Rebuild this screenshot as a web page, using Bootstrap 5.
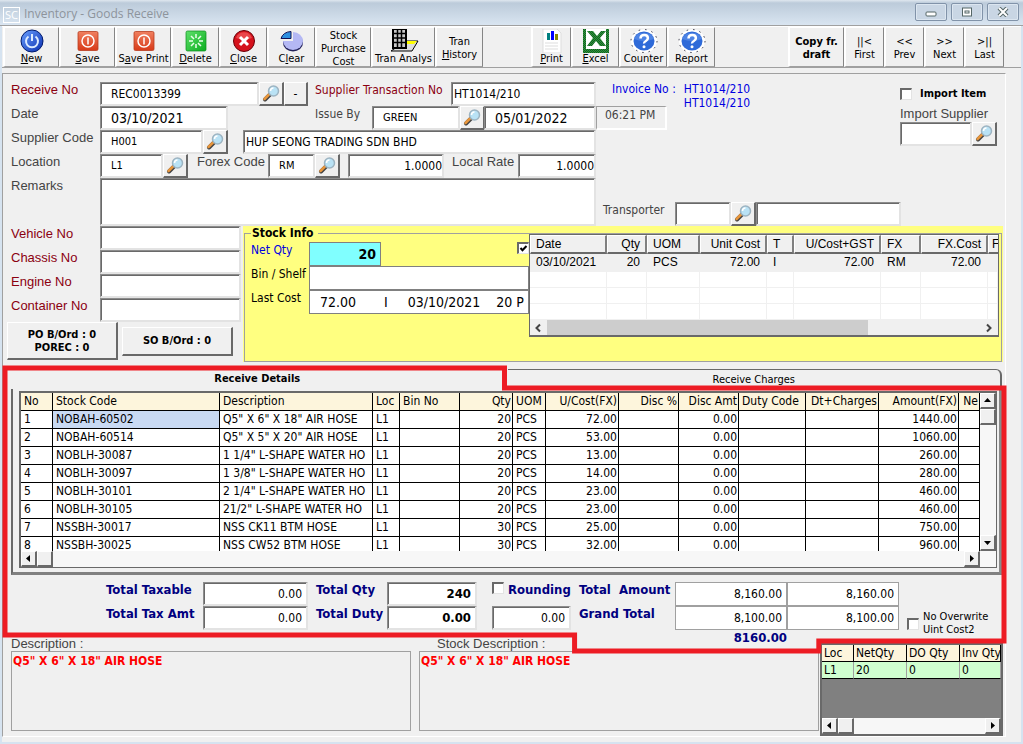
<!DOCTYPE html>
<html lang="en">
<head>
<meta charset="utf-8">
<meta name="viewport" content="width=device-width, initial-scale=1">
<title>Inventory - Goods Receive</title>
<link href="https://cdn.jsdelivr.net/npm/bootstrap@5.3.0/dist/css/bootstrap.min.css" rel="stylesheet">
<script src="https://cdn.jsdelivr.net/npm/bootstrap@5.3.0/dist/js/bootstrap.bundle.min.js"></script>
<style>
:root{--tah:"DejaVu Sans Condensed","DejaVu Sans",sans-serif;--ari:"Liberation Sans",Arial,sans-serif;--dk:#696969;--md:#a0a0a0;--lt:#e3e3e3}
body{font:12px/16px var(--tah);color:#000;background:#f0f0f0}
button,input,textarea{font:inherit;color:inherit;border-radius:0}
.win{border:solid #d6e3f0;border-width:0 2px 2px;min-height:100vh}
.titlebar{height:26px;margin:0 -2px;padding:3px 4px 0 3px;background:linear-gradient(#dfe7ef 0,#bccbda 3px,#d9e5f1 25px);border-bottom:1px solid #a0a0a0;color:#8d949c;font-family:"Open Sans",sans-serif}
.titlebar h1{font-size:12px;line-height:22px}
.logo-sc{width:17px;height:16px;border:1px solid #fff;color:#fff;font-size:11px;line-height:14px;text-align:center}
.capbtn{width:32px;height:18px;padding:0;border:1px solid #8193a9;border-radius:2px;background:#c9d6e4;box-shadow:inset 0 0 0 1px #dce6f0}
.toolbar{height:42px;border-top:1px solid #fff;border-bottom:1px solid #a0a0a0;padding:0 17px 0 1px}
.tb{height:40px;padding:1px 0 0;border:solid;border-width:1px 1px 1px 2px;border-color:#fff #858585 #a0a0a0 #fff;background:#f0f0f0;line-height:13px;text-align:center;white-space:nowrap;overflow:hidden}
.tb svg{width:24px;height:24px;display:block;margin:0 auto}
.tb .cap{display:block;line-height:14px;margin-top:-1px;position:relative;font-size:11px}
.w40{width:40px}.w48{width:48px}.w56{width:56px}.w64{width:64px}.w72{width:72px}
.blue{color:#0000e0}
.panel{margin:5px 15px 4px 0;border:solid;border-width:1px 1px 1px 1px;border-color:#a0a0a0 #fff #fff #a0a0a0}
.frow{display:grid;height:24px}
.lab{font:13px/16px var(--ari);color:#444;white-space:nowrap}
.tlab{white-space:nowrap;color:#444}
.maroon{color:#8b0010}
.fld{width:100%;min-width:0;height:24px;padding:0 4px;border:solid;border-width:1px 2px 2px 1px;border-color:#8c8c8c var(--lt) var(--lt) #8c8c8c;box-shadow:inset 1px 1px #696969;background:#fff;display:block;resize:none;outline:0}
.f11{font-size:11px}.f14{font-size:14px}.pl{padding-left:10px}.pl1{padding-left:2px}
.lens,.raised{padding:0;border:solid;border-width:1px 2px 2px 1px;border-color:#fff var(--dk) var(--dk) #fff;background:#f0f0f0}
.lens{width:25px;height:24px}.lens svg{display:block;width:20px;height:20px;margin:auto}
.r-rec{grid-template-columns:89px 159px 25px 31px 136px 1fr}
.r-rec .lens:nth-of-type(2){width:24px}
.r-date{grid-template-columns:89px 128px 87px 57px 88px 24px 1fr}
.r-sup{grid-template-columns:89px 103px 40px 1fr}
.r-loc{grid-template-columns:89px 63px 26px 79px 47px 33px 96px 74px 1fr}
.r-rem{grid-template-columns:89px 1fr;height:48px}.r-rem .fld{height:48px}
.r-side{grid-template-columns:89px 1fr;margin-right:2px}
.r-tran{grid-template-columns:72px 56px 25px 145px;padding-left:7px}
.topform{flex:0 0 585px}
.invoice{height:24px;line-height:14px}
.timebox{width:71px;border-color:#a0a0a0 #fff #fff #a0a0a0;box-shadow:none}
.chk{appearance:none;width:12px;height:12px;margin:0;flex:none;border:solid;border-width:2px 1px 1px 2px;border-color:var(--dk) var(--lt) var(--lt) var(--dk);background:#fff}
.chk:checked{background:#fff url("data:image/svg+xml,%3Csvg xmlns='http://www.w3.org/2000/svg' viewBox='0 0 9 9'%3E%3Cpath d='M1.500 4l2 2.300L7.500 2' fill='none' stroke='%23000' stroke-width='2'/%3E%3C/svg%3E")}
.sidebox{flex:0 0 240px}
.yellowbox{background:#ffff80;padding:0 1px;height:136px;min-width:0;margin-right:2px}
.yellowbox fieldset{border:1px solid #a0a0a0;height:136px;padding:0 2px 0 6px}
.yellowbox legend{float:none;width:auto;margin:0;padding:0 4px 0 1px;font-size:12px;font-weight:700;line-height:14px}
.stk{margin-top:-6px}
.stk-l{flex:0 0 278px;padding-top:8px}
.r-stk{display:grid;grid-template-columns:58px 1fr;height:24px}
.r-stk .fld{border-width:1px;border-color:#808080;box-shadow:none}
.aqua{background:#80ffff!important}
.listbox{border:1px solid #696969;border-width:1px 1px 2px;background:#fff;height:103px;min-width:0;overflow:hidden;font:12px/18px var(--ari)}
.gridt{table-layout:fixed;width:100%;border-collapse:separate;border-spacing:0}
.gridt th,.gridt td{overflow:hidden;white-space:nowrap;font-weight:400}
.list th{height:19px;line-height:16px;padding:0 5px;background:#f0f0f0;border:solid;border-width:1px 2px 2px 1px;border-color:#fff #808080 #696969 #fff}
.list th:last-child{border-right:0;padding:0 0 0 3px}
.list td{height:16px;line-height:15px;padding:0 6px;border:solid #f0f0f0;border-width:0 1px 1px 0}
.list tr.sel td{background:#f0f0f0;height:18px;line-height:17px}
.r{text-align:right}
.hs{height:16px;background:#f0f0f0}
.hs .thumb{width:321px;background:#cdcdcd}
.raised{font-size:11px;font-weight:700;line-height:13px;width:111px;height:38px;white-space:nowrap}
.raised.short{height:29px}
.details{padding-top:3px}
.tabs,.page{margin:0 3px 0 8px}
.tabs button{height:20px;border:0;background:transparent;font-size:11px;padding:0;flex:1 1 0}
.tabs .on{font-weight:700}
.tabs .off{border:solid #696969;border-width:1px 2px 0 0;border-top-right-radius:6px}
.page{border:solid;border-width:0 3px 3px 2px;border-color:#fff #8a8a8a #808080 #696969;padding:2px 2px 4px 6px}
.page-grid{border:solid #696969;border-width:2px 1px 1px 2px;background:#fff}
.main th,.main td{height:18px;line-height:17px;padding:0 1px 0 3px;border:solid #000;border-width:0 1px 1px 0}
.main th,.loct th{background:#fdf5dc}
.main .cur{background:#c9daf3}
.clip{height:158px;overflow:hidden;min-width:0}
.track{background:#f7f7f7}
.sb{width:16px;height:16px;flex:none;padding:0;border:solid;border-width:1px 2px 2px 1px;border-color:#fff #696969 #696969 #fff;background:#f0f0f0}
.sb svg{display:block;width:13px;height:13px}
.totals{display:grid;grid-template-columns:97px 105px 79px 90px 15px 87px 96px 112px 112px 1fr;grid-template-rows:24px 24px 21px;padding:7px 0 0 103px;color:#000080;font-weight:700;font-size:13px}
.totals .fld{color:#000}
.totals .norm{font-weight:400;font-size:12px}
.totals .f11{font-size:11px;line-height:13px}
.totals .thin{border-width:1px;border-color:#a0a0a0;box-shadow:none}
.totals .underamt{grid-column:8}
.bottomrow{margin-top:-14px}
.descs{height:80px;width:100%;display:block;padding:1px;resize:none;outline:0;background:transparent;border:1px solid #a0a0a0;color:#f00;font-weight:700}
.desc{flex:1 1 0}
.desc .lab{display:block;line-height:14px}
.desc+.desc .lab{padding-left:18px}
.locbox{flex:0 0 183px;height:93px;border:2px solid #696969;background:#808080;margin:6px 2px 0 1px;overflow:hidden}
.loct th{height:17px;line-height:16px;padding:0 2px;border:solid #000;border-width:0 1px 1px 0}
.loct th:last-child{padding-right:0}
.loct td{height:17px;line-height:16px;padding:0 2px;background:#d0ffd0;border:solid;border-width:0 1px 1px 0;border-color:#a0a0a0 #a0a0a0 #000}
.redline{position:absolute;left:0;top:0;width:100%;height:100%;pointer-events:none;overflow:visible}
</style>
</head>
<body>
<svg width="0" height="0" class="position-absolute" aria-hidden="true">
<defs>
<linearGradient id="gb" x2="1" y2="1"><stop offset="0" stop-color="#6aa0ff"/><stop offset="1" stop-color="#0a2fb0"/></linearGradient>
<linearGradient id="gr" x2="0" y2="1"><stop offset="0" stop-color="#f08060"/><stop offset="1" stop-color="#d83a18"/></linearGradient>
<linearGradient id="gg" x2="1" y2="1"><stop offset="0" stop-color="#5fe06a"/><stop offset="1" stop-color="#0cae20"/></linearGradient>
<pattern id="pg" width="2" height="2" patternUnits="userSpaceOnUse"><rect width="2" height="2" fill="#2d9a3c"/><rect width="1" height="1" fill="#155c22"/><rect x="1" y="1" width="1" height="1" fill="#155c22"/></pattern>
<symbol id="lens" viewBox="0 0 20 20"><path d="M9.500 10L4 15.500" stroke="#444" stroke-width="4" stroke-linecap="round"/><path d="M8 10.500L3.500 15" stroke="#e8963c" stroke-width="2.500" stroke-linecap="round"/><circle cx="12.500" cy="7" r="5" fill="#b9e2f5" stroke="#9db4c2" stroke-width="1.500"/><path d="M9.500 7a3 3 0 0 1 3-3" fill="none" stroke="#fff" stroke-width="1.500"/></symbol>
<symbol id="power" viewBox="0 0 24 24"><circle cx="12" cy="12" r="11" fill="url(#gb)" stroke="#001a6e"/><path d="M8.500 7.500a6 6 0 1 0 7 0M12 5v7" fill="none" stroke="#dcebff" stroke-width="2"/></symbol>
<symbol id="save" viewBox="0 0 24 24"><rect x="2" y="2.500" width="20" height="19" rx="1.500" fill="url(#gr)" stroke="#b83c20" stroke-width=".8"/><circle cx="12" cy="12" r="6" fill="none" stroke="#fff" stroke-width="1.500"/><path d="M12 8.500v7" stroke="#fff" stroke-width="1.500"/></symbol>
<symbol id="help" viewBox="0 0 28 24"><ellipse cx="14" cy="12" rx="13" ry="11.500" fill="#fff" stroke="#334" stroke-dasharray="1.500 5"/><ellipse cx="14" cy="12" rx="10.500" ry="9.500" fill="#2e6ad8"/><path d="M4 10a10.500 9 0 0 1 20 0q-10 4-20 0" fill="#6c9cf0" opacity=".5"/><path d="M10.500 9.500q0-3.500 3.700-3.500t3.700 3q0 2-2 3t-1.800 2.500" fill="none" stroke="#fff" stroke-width="2.500"/><circle cx="14" cy="17.700" r="1.500" fill="#fff"/></symbol>
<symbol id="al" viewBox="0 0 13 13"><path d="M8 3v7L4 6.500z"/></symbol>
<symbol id="ar" viewBox="0 0 13 13"><path d="M5 3v7l4-3.500z"/></symbol>
<symbol id="au" viewBox="0 0 13 13"><path d="M3 8h7L6.500 4z"/></symbol>
<symbol id="ad" viewBox="0 0 13 13"><path d="M3 5h7L6.500 9z"/></symbol>
</defs></svg>

<div class="win">
<header class="titlebar d-flex align-items-start">
  <span class="logo-sc mt-1 me-1">SC</span><h1 class="m-0 fw-normal flex-fill">Inventory - Goods Receive</h1>
  <div class="d-flex gap-1">
    <button class="capbtn" aria-label="Minimize"><svg class="d-block mx-auto" width="14" height="10"><rect x="2" y="5" width="10" height="4" rx="1" fill="#fff" stroke="#566"/></svg></button>
    <button class="capbtn" aria-label="Maximize"><svg class="d-block mx-auto" width="14" height="10"><rect x="2.500" y="1" width="9" height="8" fill="#fff" stroke="#566"/><rect x="5" y="4" width="4" height="2" fill="#fff" stroke="#566"/></svg></button>
    <button class="capbtn" aria-label="Close window"><svg class="d-block mx-auto" width="14" height="10"><path d="M3 1l8 8M11 1L3 9" stroke="#566" stroke-width="4"/><path d="M3 1l8 8M11 1L3 9" stroke="#fff" stroke-width="2"/></svg></button>
  </div>
</header>

<nav class="toolbar d-flex">
  <button class="tb w56"><svg><use href="#power"/></svg><span class="cap"><u>N</u>ew</span></button>
  <button class="tb w56"><svg><use href="#save"/></svg><span class="cap"><u>S</u>ave</span></button>
  <button class="tb w56"><svg><use href="#save"/></svg><span class="cap">S<u>a</u>ve Print</span></button>
  <button class="tb w48"><svg viewBox="0 0 24 24"><rect x="2" y="2" width="20" height="20" rx="1.500" fill="url(#gg)" stroke="#0a8a1a" stroke-width=".7"/><path d="M12 5v4M12 15v4M5 12h4M15 12h4M7 7l3 3M14 14l3 3M17 7l-3 3M10 14l-3 3" stroke="#eaffea" stroke-width="1.500"/></svg><span class="cap"><u>D</u>elete</span></button>
  <button class="tb w48"><svg viewBox="0 0 24 24"><circle cx="12" cy="12" r="10.500" fill="#d5121c" stroke="#6a0008"/><path d="M4 9a8.500 8.500 0 0 1 16 0q-8 3-16 0" fill="#ff7a7a" opacity=".5"/><path d="M8 8l8 8M16 8l-8 8" stroke="#fff" stroke-width="3"/></svg><span class="cap"><u>C</u>lose</span></button>
  <button class="tb w48"><svg viewBox="0 0 24 24"><ellipse cx="13" cy="14" rx="10" ry="8.500" fill="#23235a"/><ellipse cx="13" cy="12" rx="10" ry="9" fill="#b4b8f4"/><path d="M13 12V2A10 9 0 0 0 3 12z" fill="#f0f0f0"/><path d="M11 9.500V2.500Q3 3 1 9.500z" fill="#2d8fe0" stroke="#115"/></svg><span class="cap">C<u>l</u>ear</span></button>
  <button class="tb w56 f11">Stock<br>Purchase<br>Cost</button>
  <button class="tb w64"><svg viewBox="0 0 30 24" class="w-auto"><path d="M17 12h12l-6 10H2z" fill="#ddd" stroke="#000"/><path d="M17 12h11l-3 3h-9z" fill="#ff0"/><path d="M4 0h13v19H4z" fill="#c8c8c8" stroke="#000" stroke-width="2"/><path d="M4 4.500h13M4 9h13M4 13.500h13M8.500 0v18M12.500 0v18" stroke="#000" stroke-width="1.500"/></svg><span class="cap">Tran Analys</span></button>
  <button class="tb w48 f11">Tran<br><u>H</u>istory</button>
  <span class="w48"></span>
  <button class="tb w40"><svg viewBox="0 0 24 24"><path d="M3 0h14l4 4v20H3z" fill="#fff" stroke="#ddd"/><path d="M7 4h3v7H7z" fill="#008080"/><path d="M11 2h3v9h-3z" fill="#00f"/><path d="M15 5h3v6h-3z" fill="#880"/><path d="M5 14h13M5 17h13M5 20h13" stroke="#ddd"/></svg><span class="cap"><u>P</u>rint</span></button>
  <button class="tb w48"><svg viewBox="0 0 26 24" class="w-auto"><path d="M0 0h26v24H0z" fill="url(#pg)"/><path d="M3 0h20v20H3z" fill="#fff"/><path d="M4 2h6l4 5 4-5h5l-6 7 6 8h-6l-4-5-4 5H4l6-8z" fill="url(#pg)"/></svg><span class="cap"><u>E</u>xcel</span></button>
  <button class="tb w48"><svg viewBox="0 0 28 24" class="w-auto"><use href="#help"/></svg><span class="cap">Counter</span></button>
  <button class="tb w48"><svg viewBox="0 0 28 24" class="w-auto"><use href="#help"/></svg><span class="cap">Report</span></button>
  <button class="tb w56 fw-bold f11 ms-auto">Copy fr.<br>draft</button>
  <button class="tb w40 f11">||&lt;<br>First</button>
  <button class="tb w40 f11">&lt;&lt;<br>Prev</button>
  <button class="tb w40 f11">&gt;&gt;<br>Next</button>
  <button class="tb w40 f11">&gt;||<br>Last</button>
</nav>

<main class="panel">
<div class="d-flex pt-2 ps-2">
  <div class="topform">
    <div class="frow r-rec">
      <label class="lab maroon" for="rec">Receive No</label><input id="rec" class="fld pl" value="REC0013399"><button class="lens" aria-label="Find receipt"><svg><use href="#lens"/></svg></button><button class="lens">-</button><label class="tlab maroon" for="stn">Supplier Transaction No</label><input id="stn" class="fld pl1" value="HT1014/210">
    </div>
    <div class="frow r-date">
      <label class="lab" for="dt">Date</label><input id="dt" class="fld f14 pl" value="03/10/2021"><span></span><label class="tlab" for="iss">Issue By</label><input id="iss" class="fld f11 pl" value="GREEN"><button class="lens" aria-label="Find issuer"><svg><use href="#lens"/></svg></button><input class="fld f14 pl" aria-label="Issue date" value="05/01/2022">
    </div>
    <div class="frow r-sup">
      <label class="lab" for="sc">Supplier Code</label><input id="sc" class="fld f11 pl" value="H001"><button class="lens" aria-label="Find supplier"><svg><use href="#lens"/></svg></button><input class="fld pl1" aria-label="Supplier name" value="HUP SEONG TRADING SDN BHD">
    </div>
    <div class="frow r-loc">
      <label class="lab" for="loc">Location</label><input id="loc" class="fld f11 pl" value="L1"><button class="lens" aria-label="Find location"><svg><use href="#lens"/></svg></button><label class="lab ps-2" for="fx">Forex Code</label><input id="fx" class="fld f11 pl" value="RM"><button class="lens" aria-label="Find currency"><svg><use href="#lens"/></svg></button><input class="fld r px-0" aria-label="Forex rate" value="1.0000"><label class="lab ps-2" for="lr">Local Rate</label><input id="lr" class="fld r px-0" value="1.0000">
    </div>
    <div class="frow r-rem"><label class="lab" for="rem">Remarks</label><textarea id="rem" class="fld"></textarea></div>
  </div>
  <div class="flex-fill d-flex flex-column justify-content-between">
    <div class="d-flex justify-content-between">
      <div>
        <div class="invoice d-flex ps-3 blue"><span class="pe-2">Invoice No :</span><div>HT1014/210<br>HT1014/210</div></div>
        <output class="fld bg-transparent tlab px-2 timebox">06:21 PM</output>
      </div>
      <div class="pe-2 pt-1">
        <label class="d-flex align-items-center gap-2 fw-bold f11"><input type="checkbox" class="chk">Import Item</label>
        <label class="lab d-block mt-1" for="imp">Import Supplier</label>
        <div class="d-flex"><div class="w72"><input id="imp" class="fld"></div><button class="lens" aria-label="Find import supplier"><svg><use href="#lens"/></svg></button></div>
      </div>
    </div>
    <div class="frow r-tran"><label class="tlab" for="tr">Transporter</label><input id="tr" class="fld"><button class="lens" aria-label="Find transporter"><svg><use href="#lens"/></svg></button><input class="fld" aria-label="Transporter name"></div>
  </div>
</div>

<div class="d-flex">
  <div class="sidebox">
    <div class="ps-2">
      <div class="frow r-side"><label class="lab maroon" for="v1">Vehicle No</label><input id="v1" class="fld"></div>
      <div class="frow r-side"><label class="lab maroon" for="v2">Chassis No</label><input id="v2" class="fld"></div>
      <div class="frow r-side"><label class="lab maroon" for="v3">Engine No</label><input id="v3" class="fld"></div>
      <div class="frow r-side"><label class="lab maroon" for="v4">Container No</label><input id="v4" class="fld"></div>
    </div>
    <div class="d-flex align-items-center ps-1 gap-1"><button class="raised">PO B/Ord : 0<br>POREC : 0</button><button class="raised short">SO B/Ord : 0</button></div>
  </div>
  <section class="yellowbox flex-fill">
    <fieldset><legend>Stock Info</legend>
    <div class="stk d-flex">
      <div class="stk-l">
        <div class="r-stk"><label for="nq" class="blue">Net Qty</label><div class="d-flex justify-content-between"><div class="w72"><input id="nq" class="fld r fw-bold f14 aqua" value="20"></div><input type="checkbox" class="chk" checked aria-label="Show history"></div></div>
        <div class="r-stk"><label for="bs">Bin / Shelf</label><input id="bs" class="fld"></div>
        <div class="r-stk"><label for="lc">Last Cost</label><input id="lc" class="fld f14 pl pe-0" value="72.00       I     03/10/2021    20 P"></div>
      </div>
      <div class="listbox flex-fill">
        <table class="gridt list"><colgroup><col style="width:77px"><col style="width:40px"><col style="width:53px"><col style="width:67px"><col style="width:27px"><col style="width:87px"><col style="width:40px"><col style="width:67px"><col></colgroup>
        <thead><tr><th>Date</th><th class="r">Qty</th><th>UOM</th><th class="r">Unit Cost</th><th>T</th><th class="r">U/Cost+GST</th><th>FX</th><th class="r">FX.Cost</th><th>F</th></tr></thead>
        <tbody><tr class="sel"><td>03/10/2021</td><td class="r">20</td><td>PCS</td><td class="r">72.00</td><td>I</td><td class="r">72.00</td><td>RM</td><td class="r">72.00</td><td></td></tr>
        <tr><td></td><td></td><td></td><td></td><td></td><td></td><td></td><td></td><td></td></tr><tr><td></td><td></td><td></td><td></td><td></td><td></td><td></td><td></td><td></td></tr><tr><td></td><td></td><td></td><td></td><td></td><td></td><td></td><td></td><td></td></tr></tbody></table>
        <div class="hs d-flex justify-content-between"><div class="d-flex"><svg width="17" height="16"><path d="M10 4.500L6.500 8l3.500 3.500" fill="none" stroke="#444" stroke-width="2"/></svg><div class="thumb"></div></div><svg width="17" height="16"><path d="M6 4.500L9.500 8 6 11.500" fill="none" stroke="#444" stroke-width="2"/></svg></div>
      </div>
    </div>
    </fieldset>
  </section>
</div>

<section class="details position-relative">
  <div class="tabs d-flex gap-1 pt-1"><button class="on">Receive Details</button><button class="off">Receive Charges</button></div>
  <div class="page"><div class="page-grid">
    <div class="d-flex"><div class="clip flex-fill">
    <table class="gridt main"><colgroup><col style="width:32px"><col style="width:167px"><col style="width:153px"><col style="width:27px"><col style="width:60px"><col style="width:53px"><col style="width:33px"><col style="width:73px"><col style="width:60px"><col style="width:60px"><col style="width:67px"><col style="width:73px"><col style="width:80px"><col></colgroup>
    <thead><tr><th>No</th><th>Stock Code</th><th>Description</th><th>Loc</th><th>Bin No</th><th class="r">Qty</th><th>UOM</th><th class="r">U/Cost(FX)</th><th class="r">Disc %</th><th class="r">Disc Amt</th><th>Duty Code</th><th class="r">Dt+Charges</th><th class="r">Amount(FX)</th><th class="r">Ne</th></tr></thead>
    <tbody>
    <tr><td>1</td><td class="cur">NOBAH-60502</td><td>Q5" X 6" X 18" AIR HOSE</td><td>L1</td><td></td><td class="r">20</td><td>PCS</td><td class="r">72.00</td><td></td><td class="r">0.00</td><td></td><td></td><td class="r">1440.00</td><td></td></tr>
    <tr><td>2</td><td>NOBAH-60514</td><td>Q5" X 5" X 20" AIR HOSE</td><td>L1</td><td></td><td class="r">20</td><td>PCS</td><td class="r">53.00</td><td></td><td class="r">0.00</td><td></td><td></td><td class="r">1060.00</td><td></td></tr>
    <tr><td>3</td><td>NOBLH-30087</td><td>1 1/4" L-SHAPE WATER HO</td><td>L1</td><td></td><td class="r">20</td><td>PCS</td><td class="r">13.00</td><td></td><td class="r">0.00</td><td></td><td></td><td class="r">260.00</td><td></td></tr>
    <tr><td>4</td><td>NOBLH-30097</td><td>1 3/8" L-SHAPE WATER HO</td><td>L1</td><td></td><td class="r">20</td><td>PCS</td><td class="r">14.00</td><td></td><td class="r">0.00</td><td></td><td></td><td class="r">280.00</td><td></td></tr>
    <tr><td>5</td><td>NOBLH-30101</td><td>2 1/4" L-SHAPE WATER HO</td><td>L1</td><td></td><td class="r">20</td><td>PCS</td><td class="r">23.00</td><td></td><td class="r">0.00</td><td></td><td></td><td class="r">460.00</td><td></td></tr>
    <tr><td>6</td><td>NOBLH-30105</td><td>21/2" L-SHAPE WATER HO</td><td>L1</td><td></td><td class="r">20</td><td>PCS</td><td class="r">23.00</td><td></td><td class="r">0.00</td><td></td><td></td><td class="r">460.00</td><td></td></tr>
    <tr><td>7</td><td>NSSBH-30017</td><td>NSS CK11 BTM HOSE</td><td>L1</td><td></td><td class="r">30</td><td>PCS</td><td class="r">25.00</td><td></td><td class="r">0.00</td><td></td><td></td><td class="r">750.00</td><td></td></tr>
    <tr><td>8</td><td>NSSBH-30025</td><td>NSS CW52 BTM HOSE</td><td>L1</td><td></td><td class="r">30</td><td>PCS</td><td class="r">32.00</td><td></td><td class="r">0.00</td><td></td><td></td><td class="r">960.00</td><td></td></tr>
    </tbody></table></div>
    <div class="track d-flex flex-column"><button class="sb" aria-label="Scroll up"><svg><use href="#au"/></svg></button><span class="sb"></span><button class="sb mt-auto" aria-label="Scroll down"><svg><use href="#ad"/></svg></button></div></div>
    <div class="track d-flex"><button class="sb" aria-label="Scroll left"><svg><use href="#al"/></svg></button><span class="sb"></span><button class="sb ms-auto me-3" aria-label="Scroll right"><svg><use href="#ar"/></svg></button></div>
  </div></div>

  <div class="totals">
    <label for="t1">Total Taxable</label><input id="t1" class="fld r norm" value="0.00"><label class="ps-2" for="t2">Total Qty</label><input id="t2" class="fld r" value="240"><span></span>
    <label class="d-flex gap-1 text-nowrap"><input type="checkbox" class="chk">Rounding</label><label class="text-nowrap" for="t3">Total&nbsp; Amount</label><input id="t3" class="fld thin r norm" value="8,160.00"><input class="fld thin r norm" aria-label="Total amount, local" value="8,160.00"><span></span>
    <label for="t4">Total Tax Amt</label><input id="t4" class="fld r norm" value="0.00"><label class="ps-2 text-nowrap" for="t5">Total Duty</label><input id="t5" class="fld r" value="0.00"><span></span>
    <div class="pe-2"><input class="fld r norm" aria-label="Rounding amount" value="0.00"></div><label for="t6">Grand Total</label><input id="t6" class="fld thin r norm" value="8,100.00"><input class="fld thin r norm" aria-label="Grand total, local" value="8,100.00">
    <label class="d-flex gap-1 ps-2 pt-1 norm f11 text-black text-nowrap"><input type="checkbox" class="chk mt-2"><span>No Overwrite<br>Uint Cost2</span></label>
    <output class="r underamt">8160.00</output>
  </div>
  <svg class="redline" viewBox="0 0 1001 288" preserveAspectRatio="none" aria-hidden="true"><path d="M2 6H501V26H1000V278H815V288H571V272H2Z" fill="none" stroke="#ed1c24" stroke-width="5" vector-effect="non-scaling-stroke"/></svg>
</section>

<div class="bottomrow d-flex ps-2">
  <div class="desc me-2"><label class="lab" for="d1">Description :</label><textarea id="d1" class="descs">Q5" X 6" X 18" AIR HOSE</textarea></div>
  <div class="desc"><label class="lab" for="d2">Stock Description :</label><textarea id="d2" class="descs">Q5" X 6" X 18" AIR HOSE</textarea></div>
  <div class="locbox d-flex flex-column">
    <table class="gridt loct"><colgroup><col style="width:32px"><col style="width:53px"><col style="width:53px"><col></colgroup><thead><tr><th>Loc</th><th>NetQty</th><th>DO Qty</th><th>Inv Qty</th></tr></thead><tbody><tr><td>L1</td><td>20</td><td>0</td><td>0</td></tr></tbody></table>
    <div class="track d-flex mt-auto"><button class="sb" aria-label="Scroll left"><svg><use href="#al"/></svg></button><span class="sb"></span><button class="sb ms-auto" aria-label="Scroll right"><svg><use href="#ar"/></svg></button></div>
  </div>
</div>
</main>
</div>
</body>
</html>
